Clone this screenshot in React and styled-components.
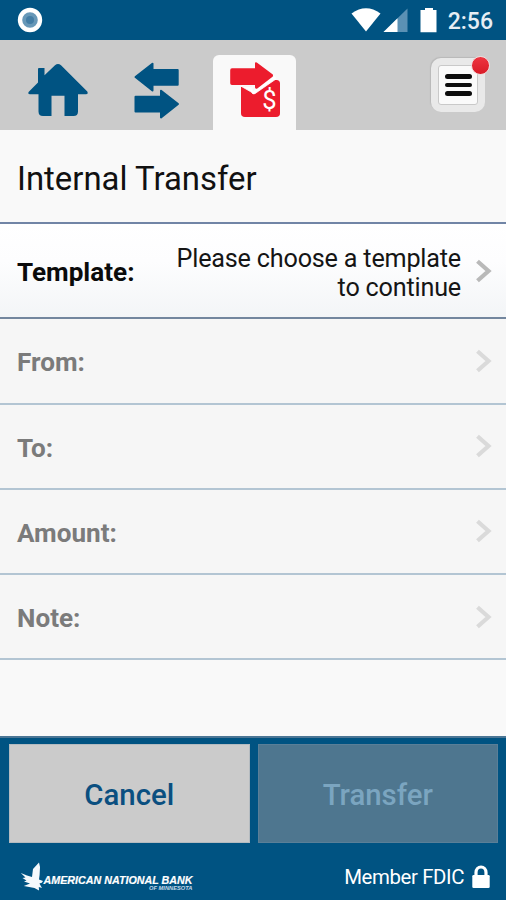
import React from "react";
import styled, { createGlobalStyle } from "styled-components";

const GlobalStyle = createGlobalStyle`
  * {
    box-sizing: border-box;
  }

  body {
    margin: 0;
    background: #f9f9f9;
    font-family: Roboto, "Liberation Sans", sans-serif;
  }
`;

const Screen = styled.div`
  width: 506px;
  height: 900px;
  display: flex;
  flex-direction: column;
  overflow: hidden;
  background: #f9f9f9;
`;

const Icon = styled.svg`
  display: block;
  flex: none;
  overflow: visible;
`;

const StatusBar = styled.header`
  height: 40px;
  flex: none;
  display: flex;
  align-items: center;
  justify-content: space-between;
  padding: 0 13px 0 18px;
  background: #005382;
`;

const StatusIcons = styled.div`
  display: flex;
  align-items: center;
`;

const Clock = styled.span`
  margin-left: 11px;
  padding-top: 3px;
  color: #e6eef4;
  font-size: 23px;
  font-weight: 500;
  line-height: 26px;
`;

const Toolbar = styled.nav`
  height: 90px;
  flex: none;
  display: flex;
  justify-content: space-between;
  padding: 15px 15px 0 17px;
  background: #cbcbcb;
`;

const Tabs = styled.div`
  display: flex;
  gap: 15.5px;
`;

const Tab = styled.button`
  width: ${(props) => props.width}px;
  height: 75px;
  display: flex;
  justify-content: center;
  padding: 7px 0 0 ${(props) => props.indent || 0}px;
  border: 0;
  border-radius: 6px 6px 0 0;
  background: ${(props) => (props.active ? "#f9f9f9" : "transparent")};
`;

const MenuButton = styled.button`
  position: relative;
  width: 54px;
  height: 54px;
  margin: 3px 6px 0 0;
  padding: 7px;
  border: 0;
  border-radius: 10px;
  background: #e9e9e9;
  box-shadow: -1px -1px 1px #b9b9b9;
`;

const MenuFace = styled.span`
  width: 40px;
  height: 40px;
  display: flex;
  flex-direction: column;
  align-items: center;
  justify-content: center;
  gap: 4px;
  border: 1px solid #c9c9c9;
  border-radius: 3px;
  background: #fafafa;
`;

const MenuLine = styled.span`
  width: 27px;
  height: 4.6px;
  border-radius: 3px;
  background: #0c0c0c;
`;

const Badge = styled.span`
  position: absolute;
  top: -2px;
  right: -5px;
  width: 19px;
  height: 19px;
  border: 1.5px solid #f1dcdc;
  border-radius: 50%;
  background: linear-gradient(#ee3540, #d91c28);
`;

const Title = styled.h1`
  height: 94px;
  flex: none;
  margin: 0;
  padding: 30px 17px 0;
  border-bottom: 2px solid #7185a6;
  color: #111;
  font-size: 32.9px;
  font-weight: 400;
  line-height: 38px;
`;

const Row = styled.div`
  height: ${(props) => props.height}px;
  flex: none;
  display: flex;
  align-items: center;
  padding: 0 14px 0 17px;
  border-bottom: 2px solid ${(props) => (props.active ? "#73869e" : "#b3c5d3")};
  background: ${(props) =>
    props.active ? "linear-gradient(#fff, #fdfdfe 40%, #f3f5f7)" : "#f6f6f6"};
`;

const Label = styled.span`
  flex: 1;
  padding-top: 3px;
  color: ${(props) => (props.active ? "#0b0b0b" : "#7b7b7b")};
  font-size: 26.1px;
  font-weight: 700;
  line-height: 30px;
`;

const Value = styled.span`
  width: 300px;
  margin-right: 15px;
  padding-top: 4px;
  color: #151515;
  font-size: 25.2px;
  letter-spacing: -0.2px;
  line-height: 29px;
  text-align: right;
`;

const Footer = styled.footer`
  flex: none;
  height: 164px;
  margin-top: auto;
  padding: 6px 8px 0 9px;
  border-top: 2px solid #4b7695;
  background: #005382;
`;

const Buttons = styled.div`
  display: grid;
  grid-template-columns: 1fr 1fr;
  gap: 8px;
`;

const Button = styled.button`
  height: 99px;
  padding: 3px 0 0;
  border: 1px solid ${(props) => (props.disabled ? "#5a7f98" : "#b4bbc0")};
  background: ${(props) => (props.disabled ? "#4e768f" : "#cbcbcb")};
  color: ${(props) => (props.disabled ? "#7ba5c0" : "#0a4f80")};
  font-family: inherit;
  font-size: 29.4px;
  font-weight: 500;
`;

const Legal = styled.div`
  height: 56px;
  display: flex;
  align-items: center;
  justify-content: space-between;
  padding: 12px 8px 0 11px;
`;

const Member = styled.span`
  display: flex;
  align-items: center;
  gap: 8px;
  color: #fff;
  font-size: 20.4px;
  letter-spacing: -0.4px;
  line-height: 24px;
`;

const RecordIcon = () => (
  <Icon width="24" height="24" viewBox="0 0 24 24">
    <circle cx="12" cy="12" r="10" fill="#6798b8" stroke="#fff" strokeWidth="4.4" />
    <circle cx="12" cy="12" r="4" fill="#437da5" />
  </Icon>
);

const SignalIcons = () => (
  <Icon width="86" height="26" viewBox="351 7 86 26">
    <path d="M351.5 13.5Q366 3 380.5 13.5L366 31.5Z" fill="#fff" />
    <path d="M383.5 32L407.5 8.5V32Z" fill="#5b91b4" />
    <path d="M383.5 32L397.5 18.2V32Z" fill="#fff" />
    <path d="M425 8h8v2h3.5v22.2h-16V10h4.5z" fill="#fff" />
  </Icon>
);

const HomeIcon = () => (
  <Icon width="60" height="56" viewBox="28 62 60 56">
    <path
      d="M55 65.3Q58 62.8 61 65.3L87.3 91.5Q88.6 94.2 86 94.2H78V111.5Q78 116 73.5 116H64.5V95.7H51.5V116H43Q38.5 116 38.5 111.5V94.2H30Q27.3 94.2 28.8 91.8L38 82.5V69Q38 68 39 68H44.5V75.2Z"
      fill="#005382"
    />
  </Icon>
);

const SwapIcon = () => (
  <Icon width="46" height="58" viewBox="134 61 46 58">
    <g fill="#005382" stroke="#005382" strokeWidth="2" strokeLinejoin="round">
      <path d="M135.5 76L152.5 62.7V69H177.7V83.7H152.5V89.5Z" />
      <path d="M135.5 95.7H161V89.7L178 103L161 116.5V110.5H135.5Z" />
    </g>
  </Icon>
);

const TransferIcon = () => (
  <Icon width="51" height="56" viewBox="230 62 51 56">
    <path
      d="M241 86.5H251.7V92.4Q252.5 95 255 93.2L273 80H276.5Q280 80 280 83.5V113.2Q280 117 276 117H245Q241 117 241 113.2Z"
      fill="#ec1c2d"
    />
    <path
      d="M241 86.2H252.2V92.8L256.4 88.5L275 76.5L276 79L255 93.6Q252.6 94.6 252.2 92.6Z"
      fill="#fff"
      stroke="#fff"
      strokeWidth="0.8"
    />
    <path
      d="M232 68.3H255V63Q255.4 61.6 256.8 62.6L272.5 74.2Q273.7 75.3 272.5 76.7L257.3 88.5Q255.6 89.4 255 87.5V85H232Q230.2 85 230.2 83.2V70.2Q230.2 68.3 232 68.3Z"
      fill="#ec1c2d"
    />
    <text
      x="269.3"
      y="109.3"
      fill="#fff"
      fontFamily="Roboto, sans-serif"
      fontSize="25.5"
      textAnchor="middle"
    >
      $
    </text>
  </Icon>
);

const Chevron = ({ active }) => (
  <Icon width="16" height="24" viewBox="0 0 16 24">
    <path
      d="M1.5 2.2L12.5 12L1.5 21.8"
      fill="none"
      stroke={active ? "#b9b9b9" : "#dadada"}
      strokeWidth="4.2"
    />
  </Icon>
);

const BankLogo = () => (
  <Icon width="174" height="30" viewBox="20 861 174 30">
    <path
      d="M20.8 872L27 874.6L32 876L33 868L39 861.5L40 866L39.6 874L39 878.4L43 880L41.8 881.8L39.4 882.6L42 887L38.8 886L39 889.5L34.5 887L23.8 885L30 882.4L24 880.6L26.5 879.6L22.5 877L25.5 876.6Z"
      fill="#f5f9fc"
    />
    <text
      x="43.5"
      y="882.5"
      fill="#fff"
      stroke="#fff"
      strokeWidth="0.2"
      fontFamily="Liberation Sans, sans-serif"
      fontSize="11.8"
      fontStyle="italic"
      fontWeight="700"
      textLength="149"
      lengthAdjust="spacingAndGlyphs"
    >
      AMERICAN NATIONAL BANK
    </text>
    <text
      x="149"
      y="889"
      fill="#c5d9e7"
      fontFamily="Liberation Sans, sans-serif"
      fontSize="5.8"
      fontStyle="italic"
      fontWeight="700"
      textLength="43.5"
      lengthAdjust="spacingAndGlyphs"
    >
      OF MINNESOTA
    </text>
  </Icon>
);

const LockIcon = () => (
  <Icon width="18" height="24" viewBox="0 0 18 24">
    <path d="M4 11V7.5a5 5.5 0 0 1 10 0V11" fill="none" stroke="#fff" strokeWidth="3.2" />
    <rect x="0.3" y="10" width="17.4" height="13" rx="1.3" fill="#fff" />
  </Icon>
);

const fields = [
  { label: "Template:", value: "Please choose a template to continue", active: true, height: 95 },
  { label: "From:", height: 85.5 },
  { label: "To:", height: 85 },
  { label: "Amount:", height: 85.5 },
  { label: "Note:", height: 85 },
];

const App = () => {
  return (
    <Screen>
      <GlobalStyle />
      <StatusBar>
        <RecordIcon />
        <StatusIcons>
          <SignalIcons />
          <Clock>2:56</Clock>
        </StatusIcons>
      </StatusBar>

      <Toolbar>
        <Tabs>
          <Tab width={82}>
            <HomeIcon />
          </Tab>
          <Tab width={83} indent={2}>
            <SwapIcon />
          </Tab>
          <Tab width={83} indent={2} active>
            <TransferIcon />
          </Tab>
        </Tabs>
        <MenuButton>
          <MenuFace>
            <MenuLine />
            <MenuLine />
            <MenuLine />
          </MenuFace>
          <Badge />
        </MenuButton>
      </Toolbar>

      <Title>Internal Transfer</Title>
      {fields.map((field) => (
        <Row key={field.label} height={field.height} active={field.active}>
          <Label active={field.active}>{field.label}</Label>
          {field.value && <Value>{field.value}</Value>}
          <Chevron active={field.active} />
        </Row>
      ))}

      <Footer>
        <Buttons>
          <Button>Cancel</Button>
          <Button disabled>Transfer</Button>
        </Buttons>
        <Legal>
          <BankLogo />
          <Member>
            Member FDIC
            <LockIcon />
          </Member>
        </Legal>
      </Footer>
    </Screen>
  );
};

export default App;
